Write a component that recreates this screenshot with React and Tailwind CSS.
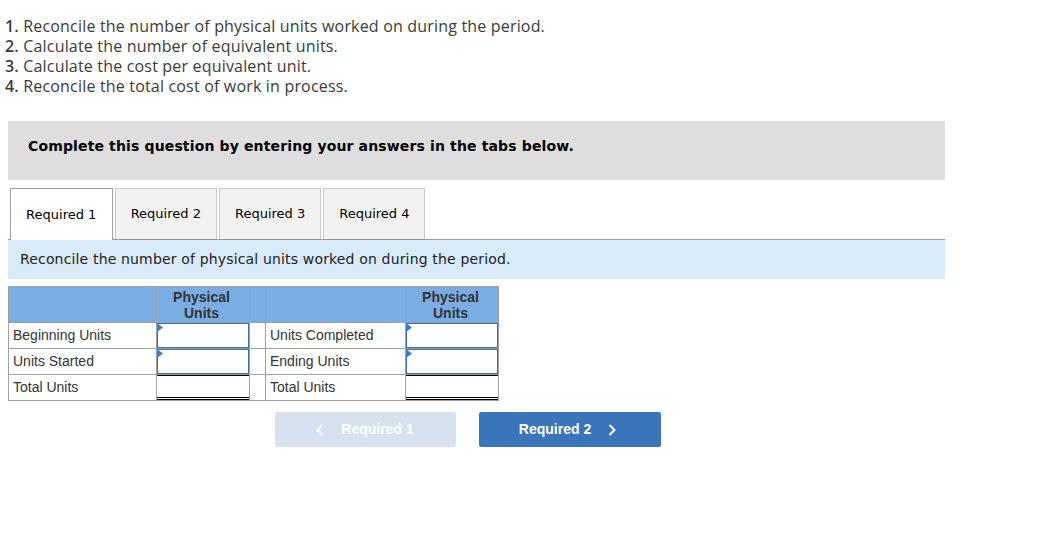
import React from "react";

function InputCell() {
  return (
    <td className="border border-[#a0a0a0] p-0 h-[26px]">
      <div className="relative h-[25px] w-full border border-[#3e6ca8] bg-white">
        <svg className="absolute left-[-1px] top-[-1px]" width="6" height="9" viewBox="0 0 6 9">
          <polygon points="0,0 6,4.5 0,9" fill="#3b7ccc" />
        </svg>
      </div>
    </td>
  );
}

function TotalCell() {
  return (
    <td className="border border-[#a0a0a0] p-0 h-[26px]">
      <div className="h-[25px] w-full border-t border-t-black border-b-[3px] border-b-black border-double"></div>
    </td>
  );
}

export default function App() {
  const labelCls = "border border-[#a0a0a0] px-[4px] text-left font-normal text-[14px] text-[#333] h-[26px]";
  const tabCls =
    "h-[51px] flex items-center justify-center border border-b-0 text-[13px] text-black";
  return (
    <div className="bg-white w-[1039px] h-[550px]" style={{ fontFamily: "'Liberation Sans', Arial, sans-serif" }}>
      <div
        className="pt-[16px] pl-[5px] text-[16px] leading-[20px] tracking-[0.18px] text-[#3a3a3a]"
        style={{ fontFamily: "'Open Sans', 'Liberation Sans', Arial, sans-serif" }}
      >
        <div><b className="font-semibold">1.</b> Reconcile the number of physical units worked on during the period.</div>
        <div><b className="font-semibold">2.</b> Calculate the number of equivalent units.</div>
        <div><b className="font-semibold">3.</b> Calculate the cost per equivalent unit.</div>
        <div><b className="font-semibold">4.</b> Reconcile the total cost of work in process.</div>
      </div>

      <div className="ml-[8px] w-[937px]" style={{ fontFamily: "'DejaVu Sans', Verdana, sans-serif" }}>
        <div className="mt-[25px] h-[59px] bg-[#dedede] pl-[20px] pt-[15px] text-[14px] tracking-[0.14px] font-bold text-black">
          Complete this question by entering your answers in the tabs below.
        </div>

        <div className="mt-[8px] flex gap-[2.3px] pl-[2px] border-b border-[#999] h-[52px] items-end">
          <div className={tabCls + " w-[102.5px] border-[#a0a0a0] bg-white h-[52px] mb-[-1px]"}>Required 1</div>
          <div className={tabCls + " w-[102px] border-[#c8c8c8] bg-[#f2f2f2]"}>Required 2</div>
          <div className={tabCls + " w-[102px] border-[#c8c8c8] bg-[#f2f2f2]"}>Required 3</div>
          <div className={tabCls + " w-[102px] border-[#c8c8c8] bg-[#f2f2f2]"}>Required 4</div>
        </div>

        <div className="h-[39px] bg-[#d9ebf9] pl-[12px] flex items-center text-[14px] tracking-[0.16px] text-[#222]">
          Reconcile the number of physical units worked on during the period.
        </div>

        <table
          className="mt-[7px] border-collapse table-fixed"
          style={{ fontFamily: "'Liberation Sans', Arial, sans-serif" }}
        >
          <colgroup>
            <col className="w-[148px]" />
            <col className="w-[93px]" />
            <col className="w-[16px]" />
            <col className="w-[140px]" />
            <col className="w-[93px]" />
          </colgroup>
          <thead>
            <tr className="h-[36px] bg-[#7aade4]">
              <th className="border border-[#a0a0a0]"></th>
              <th className="border border-[#a0a0a0] pr-[3px] text-[14px] leading-[16px] font-bold text-[#333] text-center">
                Physical<br />Units
              </th>
              <th className="border border-[#a0a0a0]"></th>
              <th className="border border-[#a0a0a0]"></th>
              <th className="border border-[#a0a0a0] pr-[3px] text-[14px] leading-[16px] font-bold text-[#333] text-center">
                Physical<br />Units
              </th>
            </tr>
          </thead>
          <tbody>
            <tr>
              <td className={labelCls}>Beginning Units</td>
              <InputCell />
              <td className="border border-[#a0a0a0]"></td>
              <td className={labelCls}>Units Completed</td>
              <InputCell />
            </tr>
            <tr>
              <td className={labelCls}>Units Started</td>
              <InputCell />
              <td className="border border-[#a0a0a0]"></td>
              <td className={labelCls}>Ending Units</td>
              <InputCell />
            </tr>
            <tr>
              <td className={labelCls}>Total Units</td>
              <TotalCell />
              <td className="border border-[#a0a0a0]"></td>
              <td className={labelCls}>Total Units</td>
              <TotalCell />
            </tr>
          </tbody>
        </table>

        <div
          className="mt-[11px] flex justify-center gap-[23px] pr-[18px]"
          style={{ fontFamily: "'Liberation Sans', Arial, sans-serif" }}
        >
          <button className="w-[181px] h-[35px] rounded-[2px] bg-[#d6e2f0] text-white text-[14px] font-bold flex items-center justify-center gap-[17px]">
            <svg width="8" height="12" viewBox="0 0 8 12">
              <polyline points="6.5,1 1.5,6 6.5,11" fill="none" stroke="white" strokeWidth="2" />
            </svg>
            <span>Required 1</span>
          </button>
          <button className="w-[182px] h-[35px] rounded-[2px] bg-[#3a75ba] text-white text-[14px] font-bold flex items-center justify-center gap-[17px] pr-[4px]">
            <span>Required 2</span>
            <svg width="8" height="12" viewBox="0 0 8 12">
              <polyline points="1.5,1 6.5,6 1.5,11" fill="none" stroke="white" strokeWidth="2" />
            </svg>
          </button>
        </div>
      </div>
    </div>
  );
}
